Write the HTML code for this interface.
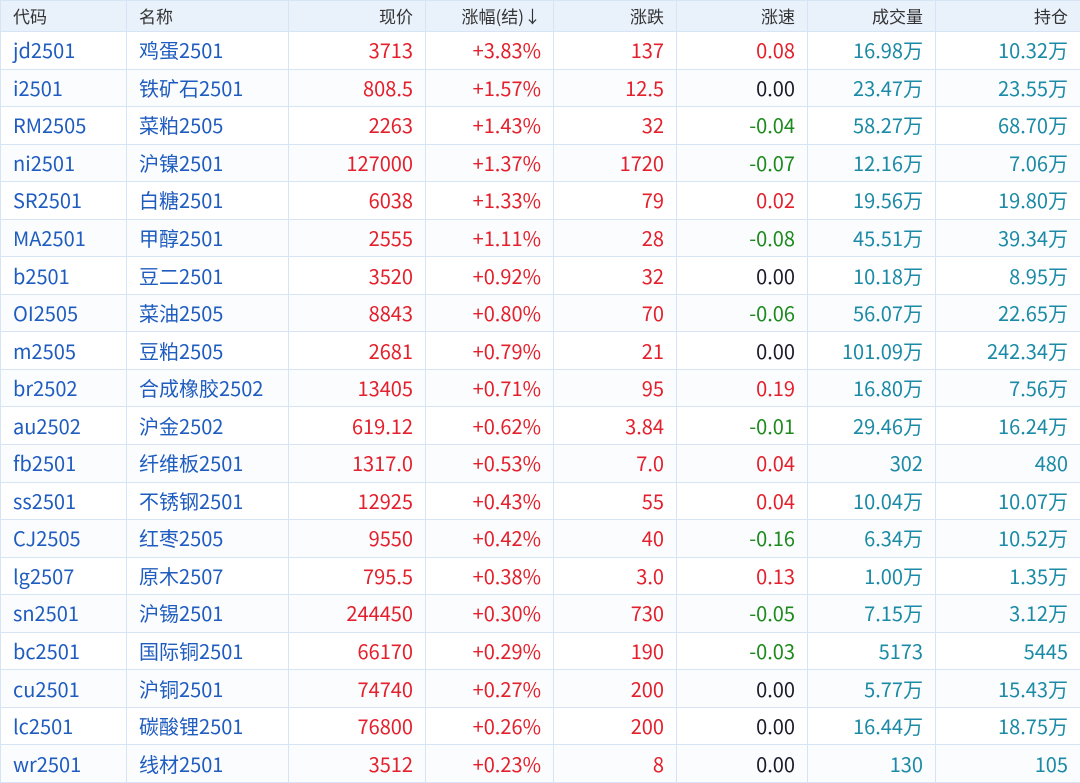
<!DOCTYPE html><html><head><meta charset="utf-8"><style>
body{margin:0;width:1080px;height:782px;overflow:hidden;background:#fff;font-family:"Noto Sans CJK SC","Liberation Sans",sans-serif;}
table{border-collapse:collapse;table-layout:fixed;width:1080px;}
td,th{border:1px solid #d6e4f6;font-size:20px;font-weight:normal;white-space:nowrap;padding:0 12px;line-height:22px;vertical-align:middle;}
th{height:30px;background:#e9f1fb;color:#333;font-size:17px;text-align:right;}
th.l,td.l{text-align:left;padding-left:12px;}
td{height:36.55px;text-align:right;}
tr:nth-child(even) td{background:#fbfcfe;}
.b{color:#1f5cbf}.r{color:#e3202b}.g{color:#1c8a1c}.k{color:#1a1a2a}.t{color:#1b8aa6}
</style></head><body><table>
<colgroup><col style="width:126px"><col style="width:162px"><col style="width:137px"><col style="width:128px"><col style="width:123px"><col style="width:131px"><col style="width:128px"><col style="width:145px"></colgroup>
<tr><th class="l">代码</th><th class="l">名称</th><th>现价</th><th>涨幅(结)↓</th><th>涨跌</th><th>涨速</th><th>成交量</th><th>持仓</th></tr>
<tbody id="b"></tbody></table>
<script>
var d=[["jd2501","鸡蛋2501","3713","+3.83%","137","0.08","16.98万","10.32万"],
["i2501","铁矿石2501","808.5","+1.57%","12.5","0.00","23.47万","23.55万"],
["RM2505","菜粕2505","2263","+1.43%","32","-0.04","58.27万","68.70万"],
["ni2501","沪镍2501","127000","+1.37%","1720","-0.07","12.16万","7.06万"],
["SR2501","白糖2501","6038","+1.33%","79","0.02","19.56万","19.80万"],
["MA2501","甲醇2501","2555","+1.11%","28","-0.08","45.51万","39.34万"],
["b2501","豆二2501","3520","+0.92%","32","0.00","10.18万","8.95万"],
["OI2505","菜油2505","8843","+0.80%","70","-0.06","56.07万","22.65万"],
["m2505","豆粕2505","2681","+0.79%","21","0.00","101.09万","242.34万"],
["br2502","合成橡胶2502","13405","+0.71%","95","0.19","16.80万","7.56万"],
["au2502","沪金2502","619.12","+0.62%","3.84","-0.01","29.46万","16.24万"],
["fb2501","纤维板2501","1317.0","+0.53%","7.0","0.04","302","480"],
["ss2501","不锈钢2501","12925","+0.43%","55","0.04","10.04万","10.07万"],
["CJ2505","红枣2505","9550","+0.42%","40","-0.16","6.34万","10.52万"],
["lg2507","原木2507","795.5","+0.38%","3.0","0.13","1.00万","1.35万"],
["sn2501","沪锡2501","244450","+0.30%","730","-0.05","7.15万","3.12万"],
["bc2501","国际铜2501","66170","+0.29%","190","-0.03","5173","5445"],
["cu2501","沪铜2501","74740","+0.27%","200","0.00","5.77万","15.43万"],
["lc2501","碳酸锂2501","76800","+0.26%","200","0.00","16.44万","18.75万"],
["wr2501","线材2501","3512","+0.23%","8","0.00","130","105"]];
var h="";d.forEach(function(r){var s=r[5][0]=="-"?"g":(r[5]=="0.00"?"k":"r");
h+='<tr><td class="l b">'+r[0]+'</td><td class="l b">'+r[1]+'</td><td class="r">'+r[2]+'</td><td class="r">'+r[3]+'</td><td class="r">'+r[4]+'</td><td class="'+s+'">'+r[5]+'</td><td class="t">'+r[6]+'</td><td class="t">'+r[7]+'</td></tr>';});
document.getElementById("b").innerHTML=h;
</script></body></html>
